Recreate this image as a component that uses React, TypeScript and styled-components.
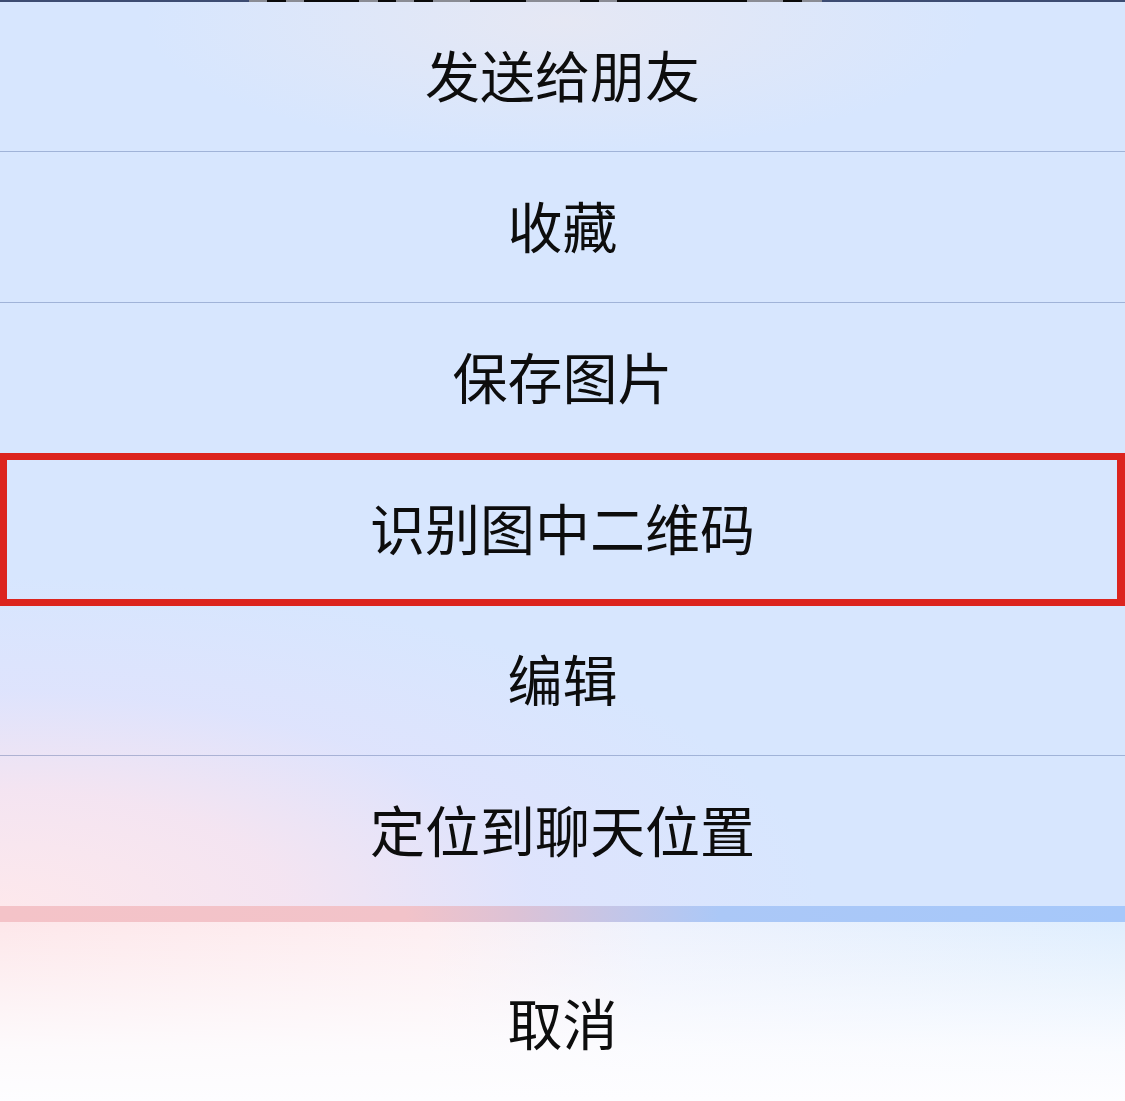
import React from 'react'
import styled, { createGlobalStyle } from 'styled-components'

const GlobalStyle = createGlobalStyle`
  html, body {
    margin: 0;
    padding: 0;
    width: 1125px;
    height: 1101px;
    overflow: hidden;
    background: #d7e6fe;
  }
  body {
    font-family: "Noto Sans CJK SC", "Noto Sans", sans-serif;
  }
`

const Sheet = styled.div`
  display: flex;
  flex-direction: column;
  width: 1125px;
  height: 1101px;
`

// sliver of the content that sits behind the sheet
const TopStrip = styled.div`
  height: 2px;
  flex-shrink: 0;
  background: linear-gradient(
    90deg,
    #3d4c72 0px, #3d4c72 249px,
    #8a8c94 249px, #8a8c94 267px,
    #0a0a0a 267px, #0a0a0a 286px,
    #8a8c94 286px, #8a8c94 304px,
    #0a0a0a 304px, #0a0a0a 359px,
    #8a8c94 359px, #8a8c94 378px,
    #0a0a0a 378px, #0a0a0a 396px,
    #8a8c94 396px, #8a8c94 414px,
    #0a0a0a 414px, #0a0a0a 433px,
    #8a8c94 433px, #8a8c94 470px,
    #0a0a0a 470px, #0a0a0a 526px,
    #8a8c94 526px, #8a8c94 580px,
    #0a0a0a 580px, #0a0a0a 599px,
    #8a8c94 599px, #8a8c94 617px,
    #0a0a0a 617px, #0a0a0a 747px,
    #8a8c94 747px, #8a8c94 783px,
    #0a0a0a 783px, #0a0a0a 802px,
    #8a8c94 802px, #8a8c94 822px,
    #3d4c72 822px, #3d4c72 100%
  );
`

const Options = styled.div`
  display: flex;
  flex-direction: column;
  background:
    radial-gradient(ellipse 420px 130px at 50% 20px, rgba(232, 232, 242, 0.85), rgba(232, 232, 242, 0)),
    radial-gradient(ellipse 820px 330px at 0% 100%, #fde8ec 0%, rgba(247, 228, 240, 0.9) 35%, rgba(226, 226, 252, 0.65) 65%, rgba(215, 230, 254, 0) 100%),
    #d7e6fe;
`

const Row = styled.div<{ $height: number; $divider?: boolean; $highlighted?: boolean }>`
  position: relative;
  display: flex;
  align-items: center;
  justify-content: center;
  box-sizing: border-box;
  padding-bottom: 6px;
  height: ${({ $height }) => $height}px;
  flex-shrink: 0;
  border-bottom: ${({ $divider }) => ($divider ? '1px solid rgba(50, 75, 140, 0.33)' : 'none')};

  ${({ $highlighted }) =>
    $highlighted &&
    `
    &::after {
      content: '';
      position: absolute;
      left: 0;
      right: 0;
      top: -1px;
      bottom: -2px;
      border: 7px solid #dc241e;
      border-right-width: 8px;
      pointer-events: none;
    }
  `}
`

const Label = styled.span`
  font-size: 55px;
  line-height: 1;
  color: #0d0d0d;
`

const Band = styled.div`
  height: 16px;
  flex-shrink: 0;
  background: linear-gradient(
    90deg,
    #f4c3c8 0%,
    #f2c3c9 36%,
    #dcc2d6 46%,
    #c0c6ea 56%,
    #abc8f7 64%,
    #a6c8fa 100%
  );
`

const Cancel = styled.div`
  flex: 1;
  display: flex;
  align-items: center;
  justify-content: center;
  padding-top: 20px;
  background:
    linear-gradient(180deg, rgba(255, 255, 255, 0) 0%, rgba(253, 253, 255, 0.85) 70%, #fdfdff 100%),
    linear-gradient(90deg, #fde7ea 0%, #fdeef1 38%, #eef2fd 58%, #dfeefe 100%);
`

const items = ['发送给朋友', '收藏', '保存图片', '识别图中二维码', '编辑', '定位到聊天位置']

export default function App() {
  return (
    <>
      <GlobalStyle />
      <Sheet>
        <TopStrip />
        <Options>
          {items.map((text, i) => {
            const last = i === items.length - 1
            return (
              <Row
                key={text}
                $height={i === 0 ? 150 : last ? 150 : 151}
                $divider={!last}
                $highlighted={i === 3}
              >
                <Label>{text}</Label>
              </Row>
            )
          })}
        </Options>
        <Band />
        <Cancel>
          <Label>取消</Label>
        </Cancel>
      </Sheet>
    </>
  )
}
